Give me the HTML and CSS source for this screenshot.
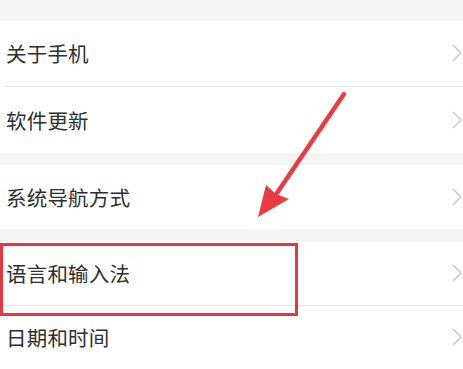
FILE: index.html
```html
<!DOCTYPE html>
<html lang="zh">
<head>
<meta charset="utf-8">
<link rel="stylesheet" href="styles.css">
</head>
<body>
<div class="screen">
  <div class="gap gap-top"></div>
  <div class="group">
    <div class="row r1"><span class="label">关于手机</span><svg class="chev" viewBox="0 0 12 18"><path d="M2 1 L10 9 L2 17"/></svg></div>
    <div class="divider"></div>
    <div class="row r2"><span class="label">软件更新</span><svg class="chev" viewBox="0 0 12 18"><path d="M2 1 L10 9 L2 17"/></svg></div>
  </div>
  <div class="gap gap-a"></div>
  <div class="group">
    <div class="row r3"><span class="label">系统导航方式</span><svg class="chev" viewBox="0 0 12 18"><path d="M2 1 L10 9 L2 17"/></svg></div>
  </div>
  <div class="gap gap-b"></div>
  <div class="group">
    <div class="row r4"><span class="label">语言和输入法</span><svg class="chev" viewBox="0 0 12 18"><path d="M2 1 L10 9 L2 17"/></svg></div>
    <div class="divider"></div>
    <div class="row r5"><span class="label">日期和时间</span><svg class="chev" viewBox="0 0 12 18"><path d="M2 1 L10 9 L2 17"/></svg></div>
  </div>
  <svg class="annot" viewBox="0 0 463 369" width="463" height="369">
    <rect class="box" x="1.5" y="244.5" width="295" height="70"/>
    <line class="shaft" x1="344" y1="94" x2="277" y2="193"/>
    <polygon class="head" points="258,217 266,185 276,194 289,199"/>
  </svg>
</div>
</body>
</html>
```

FILE: styles.css
```css
html, body {
  margin: 0;
  padding: 0;
  background: #f4f4f4;
}
.screen {
  position: relative;
  width: 463px;
  height: 369px;
  overflow: hidden;
  font-family: "Noto Sans CJK SC", "Noto Sans", sans-serif;
  background: #f4f4f4;
}
.gap-top { height: 21px; }
.gap-a { height: 12px; }
.gap-b { height: 13px; }
.group {
  background: #fff;
}
.row {
  display: flex;
  align-items: center;
  justify-content: space-between;
  padding-left: 6px;
  box-sizing: border-box;
}
.r1 { height: 65px; padding-bottom: 2px; }
.r2 { height: 66px; }
.r3 { height: 64px; padding-bottom: 1px; }
.r4 { height: 63px; padding-bottom: 2px; }
.r5 { height: 70px; padding-bottom: 8px; }
.label {
  font-size: 20.5px;
  color: #2e2e2e;
  letter-spacing: 0.2px;
}
.chev {
  width: 12px;
  height: 18px;
  margin-right: 0;
  flex: none;
}
.chev path {
  fill: none;
  stroke: #c9c9c9;
  stroke-width: 1.5;
}
.divider {
  height: 1px;
  margin-left: 5px;
  background: #e6e6e6;
}
.annot {
  position: absolute;
  left: 0;
  top: 0;
  pointer-events: none;
}
.box {
  fill: none;
  stroke: #e8363f;
  stroke-width: 3;
}
.shaft {
  stroke: #ea3a42;
  stroke-width: 4.5;
  stroke-linecap: round;
}
.head {
  fill: #ea3a42;
}
```
